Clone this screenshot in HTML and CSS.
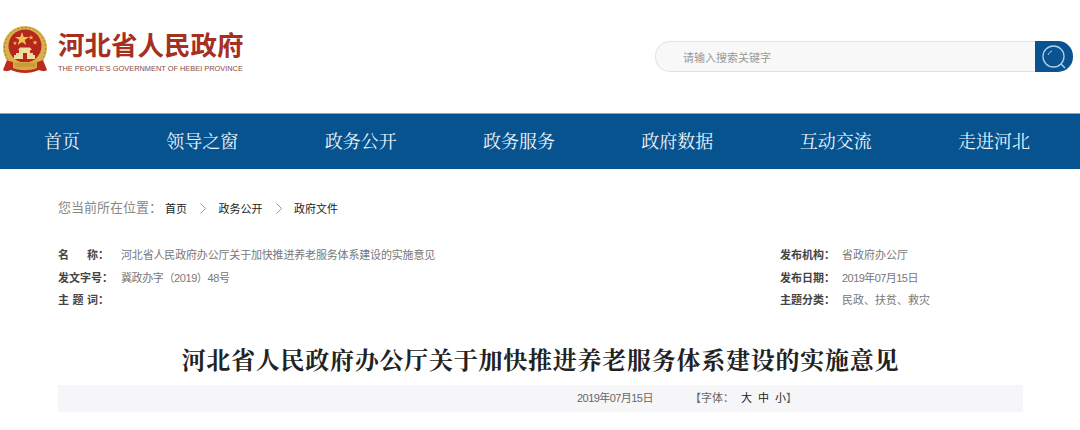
FILE: index.html
```html
<!DOCTYPE html>
<html lang="zh-CN">
<head>
    <meta charset="UTF-8">
    <title>河北省人民政府办公厅关于加快推进养老服务体系建设的实施意见</title>
    <link rel="stylesheet" href="styles.css">
</head>
<body>

    <!-- Header -->
    <div class="header">
        <div class="logo">
            <svg class="emblem" viewBox="0 0 46 50" width="46" height="50">
                <circle cx="23" cy="22" r="22" fill="#d8b04c"/>
                <circle cx="23" cy="22" r="20.500" fill="none" stroke="#a87f2c" stroke-width="1" stroke-dasharray="2 2"/>
                <circle cx="23" cy="20" r="16.500" fill="#b5271c"/>
                <path d="M20 6l1.700 5h5.300l-4.300 3.100 1.600 5-4.300-3.100-4.300 3.100 1.600-5-4.300-3.100h5.300z" fill="#eec64f"/>
                <path d="M29 9l.6 1.800h1.900l-1.500 1.100.6 1.800-1.600-1.100-1.500 1.100.6-1.800-1.500-1.100h1.900zM33 14l.6 1.800h1.900l-1.500 1.100.6 1.800-1.600-1.100-1.500 1.100.6-1.800-1.500-1.100h1.900zM13 15l.5 1.500h1.600l-1.300.9.500 1.500-1.300-.9-1.300.9.500-1.500-1.300-.9h1.600z" fill="#eec64f"/>
                <path d="M16 24l2-2.500h10l2 2.500h-2v3h3v2h2v4H12v-4h2v-2h3v-3z" fill="#f0dca0"/>
                <path d="M21 27h4v6h-4z" fill="#b5271c"/>
                <path d="M5 34c5 4 31 4 36 0l4 10c-3 2-5 1-8 0-9 4-19 4-28 0-3 1-5 2-8 0z" fill="#bd2a1e"/>
                <path d="M11 36h24v6c-7 3-17 3-24 0z" fill="#d8a83f"/>
                <path d="M13 38h20M13 40h20" stroke="#a87f2c" stroke-width=".6"/>
            </svg>
            <div class="logo-text">
                <div class="logo-cn">河北省人民政府</div>
                <div class="logo-en">THE PEOPLE'S GOVERNMENT OF HEBEI PROVINCE</div>
            </div>
        </div>
        <div class="search">
            <div class="search-input">请输入搜索关键字</div>
            <div class="search-btn">
                <svg viewBox="0 0 28 28" width="28" height="28">
                    <circle cx="13.500" cy="13.500" r="10.500" fill="none" stroke="#a9d3ea" stroke-width="1.300"/>
                    <path d="M21 21l4 4" stroke="#a9d3ea" stroke-width="1.500"/>
                    <path d="M8 12a6 6 0 0 1 4-4" fill="none" stroke="#a9d3ea" stroke-width="1"/>
                </svg>
            </div>
        </div>
    </div>

    <!-- Nav -->
    <div class="nav">
        <a href="#">首页</a>
        <a href="#">领导之窗</a>
        <a href="#">政务公开</a>
        <a href="#">政务服务</a>
        <a href="#">政府数据</a>
        <a href="#">互动交流</a>
        <a href="#">走进河北</a>
    </div>

    <div class="main">
        <div class="crumbs">
            <span class="crumbs-label">您当前所在位置：</span>
            <a href="#">首页</a>
            <svg class="crumbs-sep" viewBox="0 0 6 11" width="6" height="11"><path d="M.5.5l5 5-5 5" fill="none" stroke="#999" stroke-width="1"/></svg>
            <a href="#">政务公开</a>
            <svg class="crumbs-sep" viewBox="0 0 6 11" width="6" height="11"><path d="M.5.5l5 5-5 5" fill="none" stroke="#999" stroke-width="1"/></svg>
            <a href="#">政府文件</a>
        </div>

        <!-- Document info -->
        <div class="info">
            <div class="info-col">
                <div class="info-row"><b class="info-key key-spread"><i>名</i><i>称：</i></b><span class="doc-name">河北省人民政府办公厅关于加快推进养老服务体系建设的实施意见</span></div>
                <div class="info-row"><b class="info-key">发文字号：</b><span class="doc-num">冀政办字（2019）48号</span></div>
                <div class="info-row"><b class="info-key key-spread"><i>主</i><i>题</i><i>词：</i></b><span></span></div>
            </div>
            <div class="info-col info-right">
                <div class="info-row"><b class="info-key">发布机构：</b><span>省政府办公厅</span></div>
                <div class="info-row"><b class="info-key">发布日期：</b><span class="date">2019年07月15日</span></div>
                <div class="info-row"><b class="info-key">主题分类：</b><span>民政、扶贫、救灾</span></div>
            </div>
        </div>

        <h1>河北省人民政府办公厅关于加快推进养老服务体系建设的实施意见</h1>

        <div class="meta">
            <span class="date">2019年07月15日</span>
            <span class="meta-font">【字体：<a href="#">大</a><a href="#">中</a><a href="#">小</a>】</span>
        </div>
    </div>

</body>
</html>
```

FILE: styles.css
```css
* {
    margin: 0;
    padding: 0;
    box-sizing: border-box;
}
body {
    background: #fff;
    color: #333;
    font-family: "Liberation Sans", "Noto Sans CJK SC", sans-serif;
    font-size: 11px;
    overflow: hidden;
}
a {
    color: inherit;
    text-decoration: none;
}
.header {
    height: 113px;
    display: flex;
    justify-content: space-between;
    padding: 26px 7px 0 2px;
}
.logo {
    display: flex;
    align-items: flex-start;
    gap: 10px;
}
.logo-cn {
    font-size: 26.500px;
    line-height: 34px;
    margin-top: 3px;
    font-weight: 700;
    color: #a5301f;
}
.logo-en {
    font-size: 7.400px;
    line-height: 12px;
    color: #8a4a3e;
    white-space: nowrap;
}
.search {
    display: flex;
    width: 418px;
    height: 31px;
    margin-top: 15px;
}
.search-input {
    flex: 1;
    background: #f8f8f8;
    border: 1px solid #e2e2e2;
    border-right: none;
    border-radius: 15px 0 0 15px;
    padding-left: 27px;
    line-height: 32px;
    color: #999;
}
.search-btn {
    width: 38px;
    background: #0b5390;
    border-radius: 0 15px 15px 0;
    display: flex;
    align-items: center;
    justify-content: center;
}
.nav {
    height: 56px;
    background: #06538f;
    border-top: 1px solid #7fa9c6;
    display: flex;
    justify-content: space-between;
    padding: 0 50px 0 44px;
}
.nav a {
    color: #eef4f8;
    font-family: "Liberation Serif", "Noto Serif CJK SC", serif;
    font-size: 18px;
    line-height: 56px;
}
.main {
    padding: 0 57px 0 58px;
}
.crumbs {
    display: flex;
    align-items: center;
    height: 20px;
    margin-top: 29px;
    color: #222;
}
.crumbs-label {
    font-size: 13px;
    line-height: 18px;
    color: #888;
    margin-right: 3px;
}
.crumbs-sep {
    margin: 0 12.500px 0 13px;
}
.info {
    display: flex;
    justify-content: space-between;
    margin-top: 26px;
}
.info-row {
    display: flex;
    height: 22.500px;
    line-height: 22.500px;
    color: #777;
}
.info-key {
    width: 63px;
    color: #444;
    flex-shrink: 0;
}
.key-spread {
    display: flex;
    justify-content: space-between;
    width: 51px;
    margin-right: 12px;
}
.key-spread i {
    font-style: normal;
}
.doc-name {
    letter-spacing: -0.170px;
}
.doc-num {
    letter-spacing: -0.400px;
}
.date {
    letter-spacing: -0.550px;
}
.info-right {
    width: 243px;
}
.info-right .info-key {
    width: 62px;
}
h1 {
    font-family: "Liberation Serif", "Noto Serif CJK SC", "Noto Sans CJK SC", serif;
    font-size: 24px;
    letter-spacing: 0.750px;
    line-height: 30px;
    text-align: center;
    color: #222;
    margin-top: 34px;
}
.meta {
    display: flex;
    height: 27px;
    line-height: 27px;
    margin-top: 9px;
    background: #f6f6f8;
    padding-left: 519px;
    color: #666;
}
.meta-font {
    margin-left: 37px;
}
.meta-font a {
    color: #222;
    margin-left: 6px;
}
.meta-font a:first-child {
    margin-left: 7px;
}
```
